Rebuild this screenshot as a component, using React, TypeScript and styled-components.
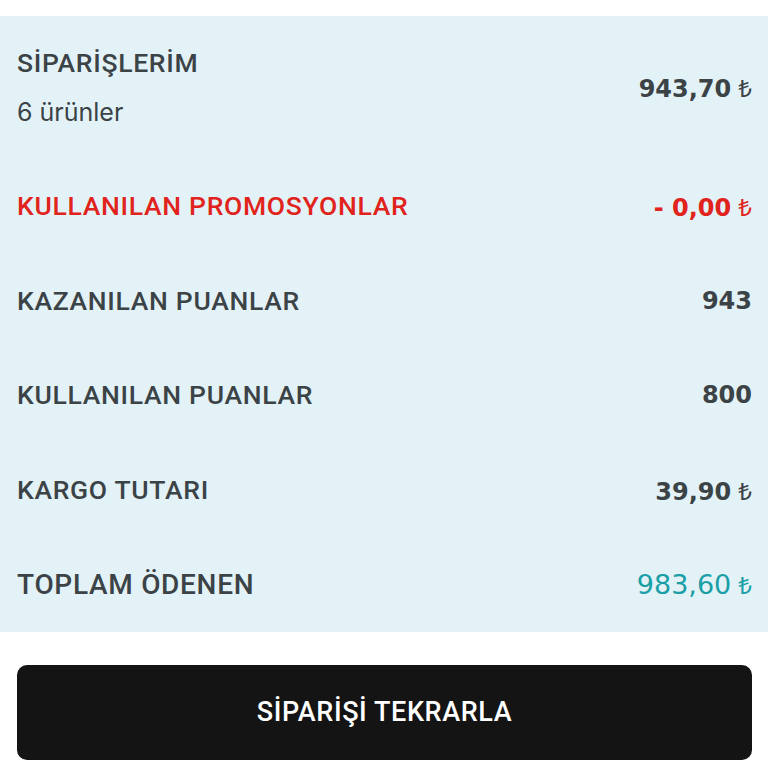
import React from 'react';
import styled, { createGlobalStyle } from 'styled-components';

const GlobalStyle = createGlobalStyle`
  html, body {
    margin: 0;
    padding: 0;
    background: #ffffff;
  }
  * {
    box-sizing: border-box;
  }
`;

const Page = styled.div`
  width: 768px;
  padding-top: 16px;
  font-family: Roboto, "Noto Sans", sans-serif;
`;

const Summary = styled.div`
  background-color: #e3f2f6;
  padding: 0 16px 0 17px;
  display: flex;
  flex-direction: column;
`;

const Row = styled.div<{ $tall?: boolean }>`
  display: flex;
  justify-content: space-between;
  align-items: center;
  height: ${(p) => (p.$tall ? '143px' : '94.6px')};
`;

const LabelBlock = styled.div`
  display: flex;
  flex-direction: column;
  gap: 19px;
`;

const Label = styled.span<{ $tone?: 'red'; $big?: boolean }>`
  font-size: ${(p) => (p.$big ? '28px' : '26.5px')};
  font-weight: 500;
  line-height: 30px;
  color: ${(p) => (p.$tone === 'red' ? '#e0231c' : '#3b4347')};
  letter-spacing: 0.7px;
`;

const Sub = styled.span`
  font-family: Inter, "Noto Sans", sans-serif;
  font-size: 25px;
  line-height: 30px;
  font-weight: 400;
  color: #3b4347;
`;

const Value = styled.span<{ $tone?: 'red' | 'teal' }>`
  font-family: "DejaVu Sans", "Noto Sans", sans-serif;
  font-size: ${(p) => (p.$tone === 'teal' ? '27px' : '24px')};
  font-weight: ${(p) => (p.$tone === 'teal' ? 400 : 700)};
  color: ${(p) =>
    p.$tone === 'red' ? '#e0231c' : p.$tone === 'teal' ? '#1a9fa6' : '#3b4347'};
`;

const Lira = styled.span`
  font-family: "Noto Sans", "DejaVu Sans", sans-serif;
  font-weight: 400;
  font-size: 24px;
  margin-left: 7px;
`;

const ButtonWrap = styled.div`
  padding: 33px 16px 0 17px;
`;

const RepeatButton = styled.button`
  width: 100%;
  height: 95px;
  border: none;
  border-radius: 10px;
  background-color: #141414;
  color: #ffffff;
  font-family: Roboto, "Noto Sans", sans-serif;
  font-size: 27px;
  font-weight: 500;
  letter-spacing: 0.6px;
  cursor: pointer;
`;

const Money: React.FC<{ amount: string; tone?: 'red' | 'teal' }> = ({ amount, tone }) => (
  <Value $tone={tone}>
    {amount}
    <Lira>₺</Lira>
  </Value>
);

export default function App() {
  return (
    <Page>
      <GlobalStyle />
      <Summary>
        <Row $tall>
          <LabelBlock>
            <Label>SİPARİŞLERİM</Label>
            <Sub>6 ürünler</Sub>
          </LabelBlock>
          <Money amount="943,70" />
        </Row>
        <Row>
          <Label $tone="red">KULLANILAN PROMOSYONLAR</Label>
          <Money amount="- 0,00" tone="red" />
        </Row>
        <Row>
          <Label>KAZANILAN PUANLAR</Label>
          <Value>943</Value>
        </Row>
        <Row>
          <Label>KULLANILAN PUANLAR</Label>
          <Value>800</Value>
        </Row>
        <Row>
          <Label>KARGO TUTARI</Label>
          <Money amount="39,90" />
        </Row>
        <Row>
          <Label $big>TOPLAM ÖDENEN</Label>
          <Money amount="983,60" tone="teal" />
        </Row>
      </Summary>
      <ButtonWrap>
        <RepeatButton>SİPARİŞİ TEKRARLA</RepeatButton>
      </ButtonWrap>
    </Page>
  );
}
